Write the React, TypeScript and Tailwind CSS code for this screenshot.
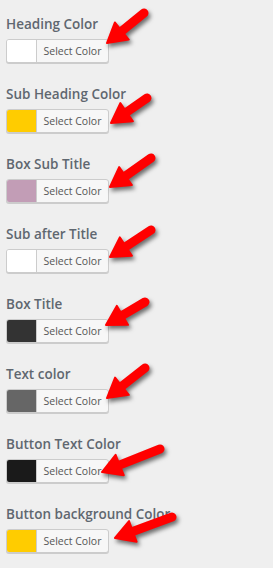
import React from 'react';

type Row = {
  label: string;
  color: string;
  tail: [number, number];
  tip: [number, number];
};

const rows: Row[] = [
  { label: 'Heading Color', color: '#ffffff', tail: [144, 13], tip: [107, 43] },
  { label: 'Sub Heading Color', color: '#ffcc00', tail: [147, 28], tip: [111, 53] },
  { label: 'Box Sub Title', color: '#c29db6', tail: [151, 18], tip: [110, 47] },
  { label: 'Sub after Title', color: '#ffffff', tail: [151, 20], tip: [110, 47] },
  { label: 'Box Title', color: '#333333', tail: [145, 22], tip: [106, 45] },
  { label: 'Text color', color: '#666666', tail: [145, 18], tip: [107, 48] },
  { label: 'Button Text Color', color: '#1a1a1a', tail: [160, 29], tip: [102, 52] },
  { label: 'Button background Color', color: '#ffcc00', tail: [172, 27], tip: [115, 48] },
];

function Arrow({ tail, tip }: { tail: [number, number]; tip: [number, number] }) {
  const dx = tip[0] - tail[0];
  const dy = tip[1] - tail[1];
  const len = Math.hypot(dx, dy);
  const ux = dx / len, uy = dy / len;
  const nx = -uy, ny = ux;
  const L = 19, W = 11;
  const bx = tip[0] - ux * L, by = tip[1] - uy * L;
  const head = `${tip[0]},${tip[1]} ${bx + nx * W},${by + ny * W} ${bx - nx * W},${by - ny * W}`;
  return (
    <svg className="absolute left-0 top-0 w-[273px] h-[70px] overflow-visible pointer-events-none drop-shadow-[2px_3px_2px_rgba(0,0,0,0.55)]" viewBox="0 0 273 70">
      <line x1={tail[0]} y1={tail[1]} x2={bx + ux * 3} y2={by + uy * 3} stroke="#ff0000" strokeWidth={9} strokeLinecap="round" />
      <polygon points={head} fill="#ff0000" stroke="#ff0000" strokeWidth={2} strokeLinejoin="round" />
    </svg>
  );
}

export default function App() {
  return (
    <div className="w-[273px] h-[568px] bg-[#efefef] overflow-hidden" style={{ fontFamily: '"Open Sans", "Noto Sans", sans-serif' }}>
      {rows.map((r, i) => (
        <div key={i} className="relative h-[70px] pt-[14px] pl-[6px]">
          <p className="text-[13.5px] leading-[20px] font-semibold text-[#5f6770] mb-[5px] whitespace-nowrap">{r.label}</p>
          <div className="flex w-[103px] h-[24px] rounded-[3px] border border-[#cccccc] bg-[#f7f7f7] shadow-[0_1px_0_#cccccc] overflow-hidden">
            <span className="w-[30px] h-full border-r border-[#cccccc]" style={{ backgroundColor: r.color }} />
            <span className="flex-1 flex items-center justify-center pt-[1px] text-[10.5px] text-[#555555]">Select Color</span>
          </div>
          <Arrow tail={r.tail} tip={r.tip} />
        </div>
      ))}
    </div>
  );
}
